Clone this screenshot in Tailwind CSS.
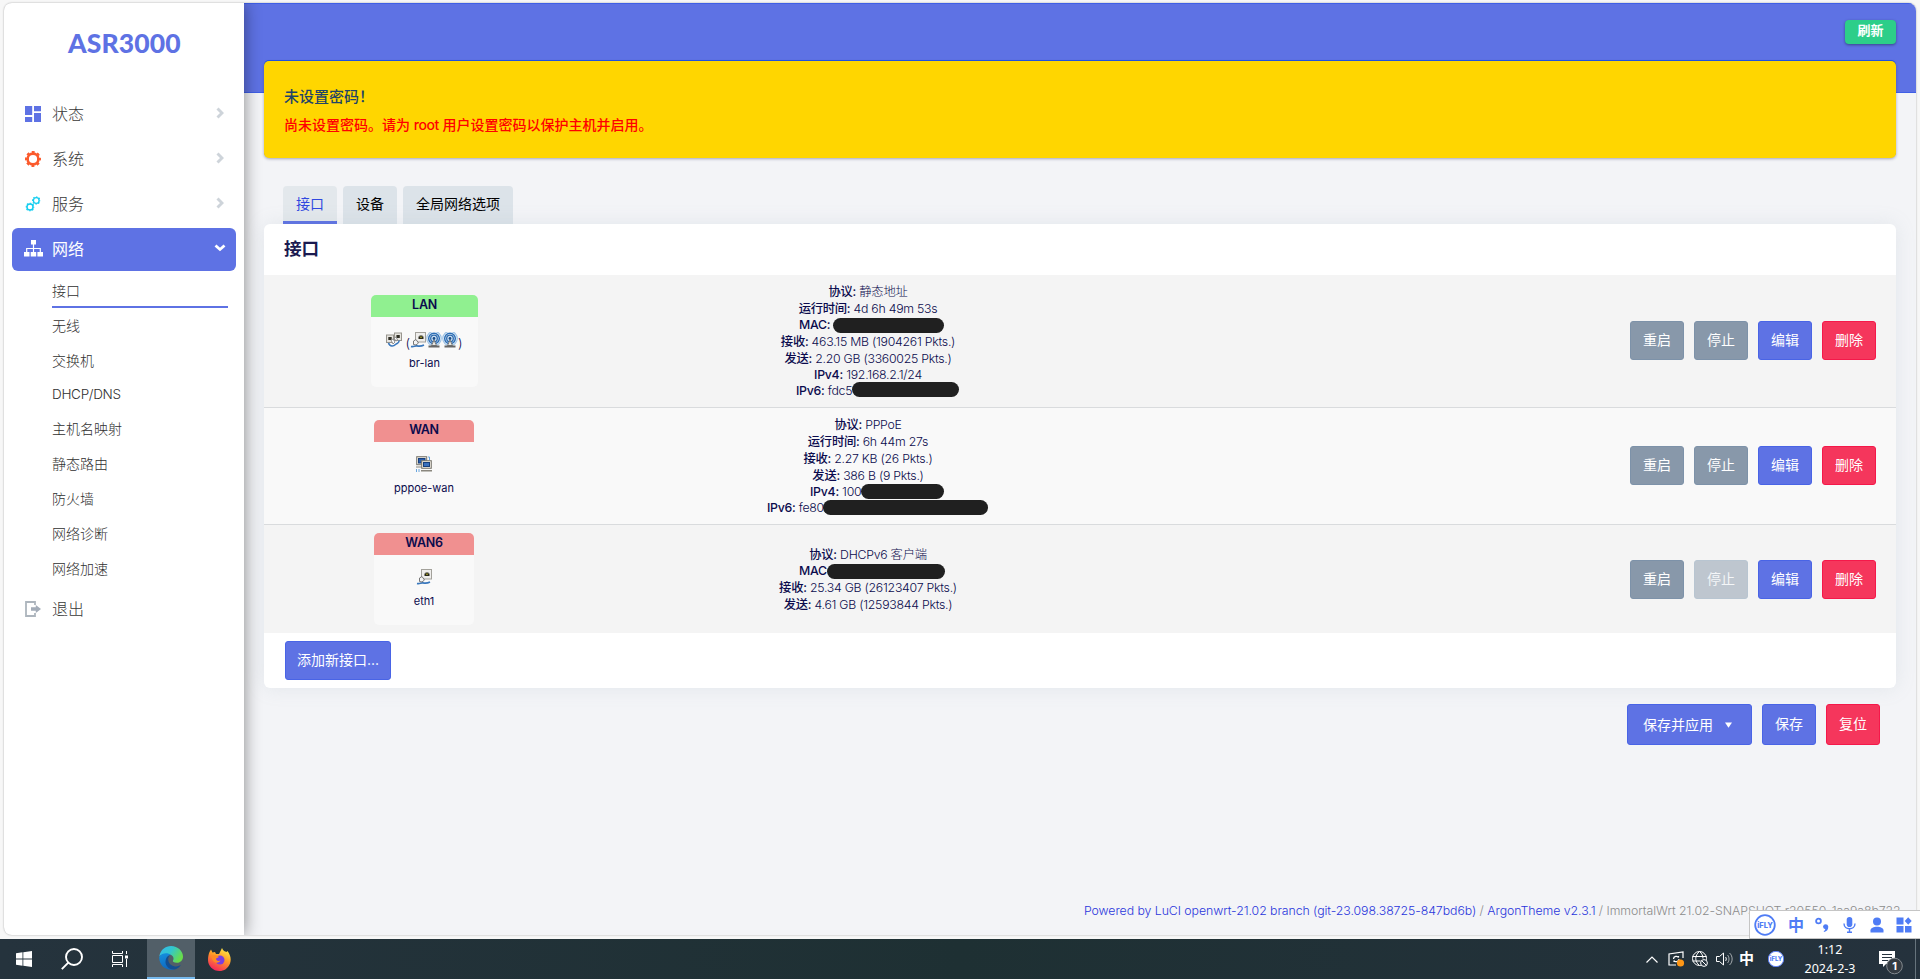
<!DOCTYPE html>
<html lang="zh-CN">
<head>
<meta charset="utf-8">
<title>ASR3000</title>
<script src="https://cdn.jsdelivr.net/npm/@tailwindcss/browser@4"></script>
</head>
<body class="w-[1920px] h-[979px] overflow-hidden bg-[#f7f7f7] flex flex-col font-['Inter','Noto_Sans_CJK_SC',sans-serif] text-[#0b0b4d]">
<svg class="hidden">
  <defs>
    <symbol id="gear" viewBox="0 0 16 16"><circle cx="8" cy="8" r="5.4" fill="none" stroke="currentColor" stroke-width="2.6"/><circle cx="8" cy="8" r="7" fill="none" stroke="currentColor" stroke-width="2" stroke-dasharray="2.9 2.598" stroke-dashoffset="1.45"/></symbol>
    <symbol id="chev" viewBox="0 0 8 12"><path d="M1.5 1.5 6 6l-4.500 4.500" fill="none" stroke="currentColor" stroke-width="2.900"/></symbol>
    <symbol id="eth" viewBox="0 0 16 16"><rect x="5.500" y=".5" width="10" height="9.500" fill="#efeeec" stroke="#a3a19b"/><path d="M8.500 4.500h1v-1h3v1h1V7h-5z" fill="#29291b"/><path d="M10 4.500h2v1.500h-2z" fill="#8a8426"/><path d="M1 14.500c3 .8 3.500-1 6-.6s4 .6 7-.9" fill="none" stroke="#3a78bd" stroke-width="1.600"/><path d="m3.500 9 2.500-1.500L8.500 11 6 13l-2.500-.5z" fill="#f4f4f4" stroke="#777"/></symbol>
    <symbol id="bridge" viewBox="0 0 16 16"><rect x="8.500" y="1" width="7" height="7.500" fill="#e7e5e0" stroke="#98958e"/><rect x=".5" y="3" width="7" height="7.500" fill="#e7e5e0" stroke="#98958e"/><path d="M2.300 5h3.400v3H2.300zM10.400 3h3.400v3h-3.400z" fill="#302f26"/><path d="M2.500 11c1.500 4 5 3.500 7 1.500s4-1 3.500-4" fill="none" stroke="#3a78bd" stroke-width="1.600"/><path d="m5 8 2-1 2 3-2 2zM8 6l2-1 1.500 3-1.500 1z" fill="#fff" stroke="#777" stroke-width=".8"/></symbol>
    <symbol id="wifi" viewBox="0 0 16 16"><circle cx="8" cy="6.500" r="7.200" fill="none" stroke="#9dc3e6" stroke-width="1.200"/><circle cx="8" cy="6.500" r="5.300" fill="none" stroke="#2c6fb8" stroke-width="1.500"/><circle cx="8" cy="6.500" r="3.300" fill="#cfe2f4" stroke="#2a68ad" stroke-width="1.300"/><circle cx="8" cy="6.500" r="1.400" fill="#174a86"/><path d="m8 8-2.500 5.500h5z" fill="#e8e8e4" stroke="#777"/><path d="M2.500 14.500h11" stroke="#666" stroke-width="1.800"/></symbol>
    <symbol id="ppp" viewBox="0 0 16 16"><rect x=".7" y=".7" width="10" height="8" fill="#eeeae0" stroke="#77756d"/><rect x="2.500" y="2.500" width="6.500" height="4.500" fill="#2a5fae" stroke="#173f7c"/><path d="M0 11h6" stroke="#8a877e" stroke-width="1.200"/><rect x="5.700" y="4.700" width="9.600" height="7.600" fill="#eeeae0" stroke="#77756d"/><rect x="7.500" y="6.500" width="6" height="4" fill="#3970bd" stroke="#173f7c"/><path d="M5 14.700h11" stroke="#8a877e" stroke-width="1.500"/><path d="M.5 13v3M3 13v3M12 1h1.500v3" stroke="#69a5dd" fill="none"/></symbol>
  </defs>
</svg>

<main class="mx-1 mt-[3px] h-[932px] w-[1912px] rounded-lg flex overflow-hidden bg-[#f3f4f7] shadow-[0_0_2px_rgba(0,0,0,0.35)] shrink-0">
  <aside class="w-60 h-full bg-white shrink-0 z-10 shadow-[0_0_16px_rgba(0,0,0,0.45)] text-[#383838]">
    <div class="h-[88px] pt-[21px] pl-[64px]"><div class="text-[26.500px] leading-[38px] font-black tracking-[0.1px] text-[#5e72e4] font-['Lato'] whitespace-nowrap">ASR3000</div></div>
    <nav class="px-2 text-base font-light">
      <div class="flex items-center h-[45px] pl-[13px] pr-[12px]"><svg class="w-4 h-4 text-[#5e72e4]" viewBox="0 0 16 16" fill="currentColor"><path d="M0 0h7.200v9H0zM9 0h7v5.200H9zM0 11h7.200v5H0zM9 7h7v9H9z"/></svg><span class="ml-[11px]">状态</span><svg class="w-2 h-3 ml-auto -mt-0.5 text-[#ced4da]"><use href="#chev"/></svg></div>
      <div class="flex items-center h-[45px] pl-[13px] pr-[12px]"><svg class="w-4 h-4 text-[#fb5a2c]"><use href="#gear"/></svg><span class="ml-[11px]">系统</span><svg class="w-2 h-3 ml-auto -mt-0.5 text-[#ced4da]"><use href="#chev"/></svg></div>
      <div class="flex items-center h-[45px] pl-[13px] pr-[12px]"><svg class="w-4 h-4 text-[#11cdef]" viewBox="0 0 16 16"><use href="#gear" x=".5" y="6.500" width="9" height="9"/><use href="#gear" x="7" y=".2" width="8.500" height="8.500"/></svg><span class="ml-[11px]">服务</span><svg class="w-2 h-3 ml-auto -mt-0.5 text-[#ced4da]"><use href="#chev"/></svg></div>
      <div class="flex items-center h-[43px] mt-[2px] pb-0.5 pl-[12px] pr-[10px] rounded-md bg-[#5e72e4] text-white font-normal"><svg class="w-[19px] h-[17px]" viewBox="0 0 19 17" fill="currentColor"><path d="M7 0h5v4.500H7zM0 12h5.500v4.500H0zM6.700 12h5.500v4.500H6.700zM13.400 12H19v4.500h-5.600z"/><path d="M9.500 4v8M2.700 12V8.500h13.600V12" fill="none" stroke="currentColor" stroke-width="1.200"/></svg><span class="ml-[9px]">网络</span><svg class="w-3 h-2 ml-auto -mt-0.5" viewBox="0 0 12 8"><path d="M1.500 1.500 6 5.500l4.500-4" fill="none" stroke="currentColor" stroke-width="2.800"/></svg></div>
      <ul class="pl-10 pr-2 text-sm text-[#303030]">
        <li class="h-[37px] pt-[2px] leading-[35px] border-b-2 border-[#5e72e4]">接口</li>
        <li class="h-[35px] leading-[35px]">无线</li>
        <li class="h-[35px] leading-[35px]">交换机</li>
        <li class="h-[33px] leading-[32px] text-[13.500px] tracking-[-0.300px]">DHCP/DNS</li>
        <li class="h-[35px] leading-[35px]">主机名映射</li>
        <li class="h-[35px] leading-[35px]">静态路由</li>
        <li class="h-[35px] leading-[35px]">防火墙</li>
        <li class="h-[35px] leading-[35px]">网络诊断</li>
        <li class="h-[35px] leading-[35px]">网络加速</li>
      </ul>
      <div class="flex items-center h-[45px] pl-[13px]"><svg class="w-4 h-4" viewBox="0 0 16 16" fill="none" stroke="#adb5bd" stroke-width="1.800"><path d="M10 4V1H1v14h9v-3"/><path d="M6 6.300h4.800V4L16 8l-5.200 4V9.700H6z" fill="#a3acb8" stroke="none"/></svg><span class="ml-[11px]">退出</span></div>
    </nav>
  </aside>

  <section class="flex-1 min-w-0 h-full flex flex-col">
    <header class="h-[90px] shrink-0 bg-[#5e72e4] border-y border-[#3f5fe6] flex justify-end items-start pt-4 pr-5">
      <span class="w-[51px] h-[24px] rounded bg-[#2dce89] text-white text-[13px] font-bold leading-[20px] text-center shadow-[0_1px_3px_rgba(0,0,0,0.4)]">刷新</span>
    </header>
    <div class="px-5 -mt-[32px] flex-1 flex flex-col">
      <div class="h-[97px] shrink-0 rounded-[5px] bg-[#ffd600] pl-5 pt-[22px] shadow-[0_1px_3px_rgba(50,50,93,0.4),0_-1px_0_#1f55e6]">
        <h4 class="text-[15px] leading-7 font-medium text-[#1f4468]">未设置密码！</h4>
        <p class="text-[14px] leading-[28px] font-medium text-[#ff0000]">尚未设置密码。请为 <span class="tracking-[-0.450px]">root</span> 用户设置密码以保护主机并启用。</p>
      </div>
      <div class="mt-[28px] h-[38px] shrink-0 pl-[19px] flex gap-1.5 text-sm leading-[36px] text-center text-black">
        <div class="w-[54px] rounded-t bg-[#e3e8ec] border-b-3 border-[#5e72e4] text-[#3048e0]">接口</div>
        <div class="w-[54px] rounded-t bg-[#dce3e9]">设备</div>
        <div class="w-[110px] rounded-t bg-[#dce3e9]">全局网络选项</div>
      </div>
      <div class="h-[464px] shrink-0 rounded-md bg-white shadow-[0_0_20px_rgba(136,152,170,0.15)] flex flex-col">
        <h3 class="h-[51px] pl-5 text-[17.600px] leading-[50px] font-bold text-[#1a1a50]">接口</h3>

        <div class="h-[133px] bg-[#f4f4f4] border-b border-[#d9dbdd] flex items-start">
          <div class="w-80 flex justify-center pt-5 pl-px">
            <div class="w-[107px] h-[92px] rounded-[5px] overflow-hidden bg-[#f9f9f9] text-center">
              <div class="h-[22px] bg-[#90f090] text-[12.500px] leading-[20px] font-semibold tracking-[-0.300px]">LAN</div>
              <div class="mt-[15px] h-5 flex justify-center items-start text-[13px] font-light leading-[22px]"><svg class="w-4 h-4 mr-[3px]"><use href="#bridge"/></svg><span>(</span><svg class="w-4 h-4"><use href="#eth"/></svg><svg class="w-4 h-4"><use href="#wifi"/></svg><svg class="w-4 h-4"><use href="#wifi"/></svg><span>)</span></div>
              <div class="text-[11px] leading-[22px]">br-lan</div>
            </div>
          </div>
          <div class="w-[568px] pt-2 text-center text-[12.300px] leading-[17px] tracking-[-0.250px] font-light whitespace-nowrap">
            <div class="h-[17px]"><b class="font-medium">协议:</b> 静态地址</div>
            <div class="h-[17px]"><b class="font-medium">运行时间:</b> 4d 6h 49m 53s</div>
            <div class="h-[16px] leading-[16px] flex pl-[215px]"><b class="font-medium w-[34px] text-left">MAC:</b><i class="w-[111px] h-[15px] rounded-full bg-[#202020] mt-px"></i></div>
            <div class="h-[17px]"><b class="font-medium">接收:</b> 463.15 MB (1904261 Pkts.)</div>
            <div class="h-[17px]"><b class="font-medium">发送:</b> 2.20 GB (3360025 Pkts.)</div>
            <div class="h-[16px] leading-[16px]"><b class="font-medium">IPv4:</b> 192.168.2.1/24</div>
            <div class="h-[16px] leading-[16px] flex pl-[212px]"><span class="w-[56px] text-left"><b class="font-medium">IPv6:</b> fdc5</span><i class="w-[107px] h-[15px] rounded-full bg-[#202020] -mt-px"></i></div>
          </div>
          <div class="ml-auto pt-[46px] pr-5 flex gap-2.5 text-sm leading-[35px] text-white text-center">
            <span class="w-[54px] h-[39px] rounded-[3px] border bg-[#8898aa] border-[#7d92a9]">重启</span><span class="w-[54px] h-[39px] rounded-[3px] border bg-[#8898aa] border-[#7d92a9]">停止</span><span class="w-[54px] h-[39px] rounded-[3px] border bg-[#5e72e4] border-[#4964e6]">编辑</span><span class="w-[54px] h-[39px] rounded-[3px] border bg-[#f5365c] border-[#f5184a]">删除</span>
          </div>
        </div>

        <div class="h-[117px] bg-[#f9f9f9] border-b border-[#d9dbdd] flex items-start">
          <div class="w-80 flex justify-center pt-3">
            <div class="w-[100px] h-[92px] rounded-[5px] overflow-hidden text-center">
              <div class="h-[22px] bg-[#f09090] text-[12.500px] leading-[20px] font-semibold tracking-[-0.300px]">WAN</div>
              <div class="mt-[14px] h-[21px] flex justify-center"><svg class="w-4 h-4"><use href="#ppp"/></svg></div>
              <div class="text-[11px] leading-[22px]">pppoe-wan</div>
            </div>
          </div>
          <div class="w-[568px] pt-2 text-center text-[12.300px] leading-[17px] tracking-[-0.250px] font-light whitespace-nowrap">
            <div class="h-[17px]"><b class="font-medium">协议:</b> PPPoE</div>
            <div class="h-[17px]"><b class="font-medium">运行时间:</b> 6h 44m 27s</div>
            <div class="h-[17px]"><b class="font-medium">接收:</b> 2.27 KB (26 Pkts.)</div>
            <div class="h-[17px]"><b class="font-medium">发送:</b> 386 B (9 Pkts.)</div>
            <div class="h-[16px] leading-[16px] flex pl-[226px]"><span class="w-[51px] text-left"><b class="font-medium">IPv4:</b> 100</span><i class="w-[83px] h-[15px] rounded-full bg-[#202020]"></i></div>
            <div class="h-[16px] leading-[16px] flex pl-[183px]"><span class="w-[56px] text-left"><b class="font-medium">IPv6:</b> fe80</span><i class="w-[165px] h-[15px] rounded-full bg-[#202020]"></i></div>
          </div>
          <div class="ml-auto pt-[38px] pr-5 flex gap-2.5 text-sm leading-[35px] text-white text-center">
            <span class="w-[54px] h-[39px] rounded-[3px] border bg-[#8898aa] border-[#7d92a9]">重启</span><span class="w-[54px] h-[39px] rounded-[3px] border bg-[#8898aa] border-[#7d92a9]">停止</span><span class="w-[54px] h-[39px] rounded-[3px] border bg-[#5e72e4] border-[#4964e6]">编辑</span><span class="w-[54px] h-[39px] rounded-[3px] border bg-[#f5365c] border-[#f5184a]">删除</span>
          </div>
        </div>

        <div class="h-[108px] bg-[#f4f4f4] flex items-start">
          <div class="w-80 flex justify-center pt-2">
            <div class="w-[100px] h-[92px] rounded-[5px] overflow-hidden bg-[#f9f9f9] text-center">
              <div class="h-[22px] bg-[#f09090] text-[12.500px] leading-[20px] font-semibold tracking-[-0.300px]">WAN6</div>
              <div class="mt-[14px] h-[21px] flex justify-center"><svg class="w-4 h-4"><use href="#eth"/></svg></div>
              <div class="text-[11px] leading-[22px]">eth1</div>
            </div>
          </div>
          <div class="w-[568px] pt-[21px] text-center text-[12.300px] leading-[17px] tracking-[-0.250px] font-light whitespace-nowrap">
            <div class="h-[17px]"><b class="font-medium">协议:</b> DHCPv6 客户端</div>
            <div class="h-[16px] leading-[16px] flex pl-[215px]"><b class="font-medium w-[28px] text-left">MAC</b><i class="w-[118px] h-[15px] rounded-full bg-[#202020] mt-px"></i></div>
            <div class="h-[17px]"><b class="font-medium">接收:</b> 25.34 GB (26123407 Pkts.)</div>
            <div class="h-[17px]"><b class="font-medium">发送:</b> 4.61 GB (12593844 Pkts.)</div>
          </div>
          <div class="ml-auto pt-[35px] pr-5 flex gap-2.5 text-sm leading-[35px] text-white text-center">
            <span class="w-[54px] h-[39px] rounded-[3px] border bg-[#8898aa] border-[#7d92a9]">重启</span><span class="w-[54px] h-[39px] rounded-[3px] border bg-[#bec6cf] border-[#b8c5d1] text-[#f4f6f8]">停止</span><span class="w-[54px] h-[39px] rounded-[3px] border bg-[#5e72e4] border-[#4964e6]">编辑</span><span class="w-[54px] h-[39px] rounded-[3px] border bg-[#f5365c] border-[#f5184a]">删除</span>
          </div>
        </div>
        <div class="pl-[21px] pt-2"><span class="block w-[106px] h-[39px] rounded-[3px] border bg-[#5e72e4] border-[#4964e6] text-white text-sm leading-[35px] text-center">添加新接口...</span></div>
      </div>

      <div class="mt-4 h-[41px] pr-4 flex justify-end gap-2.5 text-sm leading-[37px] text-white text-center">
        <span class="w-[125px] rounded-[3px] border bg-[#5e72e4] border-[#4964e6] flex items-center pl-[15px]">保存并应用<svg class="w-[7px] h-1.5 ml-[12px]" viewBox="0 0 8 6"><path d="M0 0h8L4 6z" fill="#fff"/></svg></span>
        <span class="w-[54px] rounded-[3px] border bg-[#5e72e4] border-[#4964e6]">保存</span>
        <span class="w-[54px] rounded-[3px] border bg-[#f5365c] border-[#f5184a]">复位</span>
      </div>
      <footer class="mt-auto mb-[12px] pl-[820px] text-[12.300px] leading-6 tracking-[-0.050px] font-light text-[#8c8c8c] whitespace-nowrap"><span class="text-[#2a36dc]">Powered by LuCI openwrt-21.02 branch (git-23.098.38725-847bd6b)</span> / <span class="text-[#2a36dc]">ArgonTheme v2.3.1</span> / ImmortalWrt 21.02-SNAPSHOT r20550-1aa9a8b722</footer>
    </div>
  </section>
</main>

<div class="absolute z-20 left-[1749px] top-[910px] w-[172px] h-[29px] bg-white border border-[#c5c5c5] flex items-center pl-[4px] text-[#4f7cf5]">
  <svg class="w-[22px] h-[22px]" viewBox="0 0 22 22"><circle cx="11" cy="11" r="9.800" fill="#fff" stroke="#4f7cf5" stroke-width="1.800"/><text x="11" y="13.800" font-size="7.500" font-weight="800" text-anchor="middle" fill="#4f7cf5" font-family="Inter">iFLY</text></svg>
  <span class="ml-3 w-4 text-base leading-[26px] font-bold">中</span>
  <svg class="ml-[11px] w-[14px] h-4" viewBox="0 0 14 16"><circle cx="3.500" cy="4" r="2.400" fill="none" stroke="currentColor" stroke-width="1.800"/><path d="M8 9.500a2.700 2.700 0 0 1 5.300 0c0 3-1.300 5-4.300 5.500l-.3-1c1-.4 1.500-1.200 1.600-1.800A2.700 2.700 0 0 1 8 9.500z" fill="currentColor"/></svg>
  <svg class="ml-[14px] w-[13px] h-4" viewBox="0 0 13 16"><rect x="3.700" y="0" width="5.600" height="10" rx="2.800" fill="currentColor"/><path d="M1 6.500c0 7 11 7 11 0M6.500 12v3.500M4 15.300h5" fill="none" stroke="currentColor" stroke-width="1.400"/></svg>
  <svg class="ml-[14px] w-[14px] h-4" viewBox="0 0 14 16" fill="currentColor"><circle cx="7" cy="4.400" r="4"/><path d="M.5 15.500v-2.200C.5 8.500 13.500 8.500 13.500 13.300v2.200z"/></svg>
  <svg class="ml-3 w-4 h-4" viewBox="0 0 16 16" fill="currentColor"><path d="M.5.500h7v7h-7zM.5 9h7v6.500h-7zM9 9h6.500v6.500H9zM12.200.300l3.500 3.700-3.500 3.700L8.700 4z"/></svg>
</div>

<div class="mt-1 h-10 w-full bg-gradient-to-r from-[#25333d] via-[#1e3033] to-[#25323d] flex items-center text-white shrink-0">
  <svg class="ml-4 w-4 h-4" viewBox="0 0 16 16" fill="#fff"><path d="M0 2.200 6.500 1.300v6.300H0zM7.300 1.200 16 0v7.600H7.300zM0 8.400h6.500v6.300L0 13.800zM7.300 8.400H16V16l-8.700-1.200z"/></svg>
  <svg class="ml-[29px] w-[22px] h-[22px]" viewBox="0 0 22 22" fill="none" stroke="#fff" stroke-width="1.900"><circle cx="13" cy="9" r="8"/><path d="M7.300 14.700.800 21.200"/></svg>
  <svg class="ml-[29px] w-4 h-4" viewBox="0 0 16 16" fill="none" stroke="#fff"><path d="M.5 0v2.500h10V0M.5 4.500h10v7H.5zM.5 16v-2.500h10V16M14.500 0v3M14.500 8v8"/><path d="M13 4.500h3v3h-3z" fill="#fff" stroke="none"/></svg>
  <div class="ml-[19px] w-12 h-10 bg-[#525f68] border-b-2 border-[#76b9ed] flex items-center justify-center">
    <svg class="w-6 h-6" viewBox="0 0 24 24"><defs><linearGradient id="eg" x1="0" y1="0" x2="1" y2=".5"><stop offset="0" stop-color="#35b9ee"/><stop offset=".5" stop-color="#32c6cf"/><stop offset="1" stop-color="#68dd4b"/></linearGradient><linearGradient id="eb" x1="0" y1="0" x2=".3" y2="1"><stop offset="0" stop-color="#1490df"/><stop offset="1" stop-color="#1069bf"/></linearGradient></defs><path d="M.3 10.500C1.500 3.500 6.500 0 12 0c7 0 12 5.300 12 10.500 0 4-3 6.300-6.200 6.300-3 0-4.500-1.300-3.800-2.300 1-1.300 1-4.500-2.500-5.800C7 7 1.800 8.500.3 10.500z" fill="url(#eg)"/><path d="M.2 11C3 6.500 9 6.500 12 9c-3.500 0-5 3-4.300 6.500.8 4.200 5 6.700 9.300 7.300C9 26 0 21 .2 11z" fill="url(#eb)"/><path d="M11 9.300C7.500 12 9 19.500 16 20.500c3 .4 5-1 6-1.700-1.500 2.700-4 4.300-6.700 4.800C9 23.500 5 18.500 7 13c.7-2 2.300-3.500 4-3.700z" fill="#144e91"/></svg>
  </div>
  <svg class="ml-[13px] w-[23px] h-[23px]" viewBox="0 0 23 23"><defs><linearGradient id="ff" x1=".8" y1="0" x2=".3" y2="1"><stop offset="0" stop-color="#fff14a"/><stop offset=".45" stop-color="#ff9a26"/><stop offset="1" stop-color="#f5215f"/></linearGradient></defs><path d="M1.500 4 3 1.500 4.500 4.500 7 4l1 2h3l3-6c1 3 3 3.500 4.500 4l1-1c3 4 4 8 2.500 12.500C20 20.500 16 23 11.500 23 5 23 0 18 0 12 0 9 .5 6 1.500 4z" fill="url(#ff)"/><circle cx="12" cy="12" r="4.500" fill="#7a3ee0"/><path d="M3 8c3-1.500 6-1 8 1l-3 1.500c0 2 2 3 4.500 2-2 3.500-7 2.500-8.500-1.500z" fill="#ff8a24"/></svg>

  <svg class="ml-auto w-3 h-[7px]" viewBox="0 0 12 7"><path d="M.5 6.500 6 1l5.500 5.500" fill="none" stroke="#fff" stroke-width="1.200"/></svg>
  <svg class="ml-[10px] w-[17px] h-4" viewBox="0 0 17 16" fill="none" stroke="#fff" stroke-width="1.200"><path d="M8 14H1V3l14-2v6"/><path d="M5.500 8c0-3 4-3.500 5-1.500V5M11 8c0 3-4 3.500-5 1.500V11"/><circle cx="12.500" cy="12" r="3.600" fill="#ff9716" stroke="none"/></svg>
  <svg class="ml-[7px] w-4 h-4" viewBox="0 0 16 16" fill="none" stroke="#fff"><circle cx="7.500" cy="7.500" r="7"/><path d="M7.500.5c-5 4-5 10 0 14M7.500.5c2.500 2 3.500 4.500 3.500 7M.5 5.500h14M.5 10h8"/><circle cx="12" cy="12" r="3.400" fill="#25323d"/><path d="m9.700 9.700 4.600 4.600"/></svg>
  <svg class="ml-2 w-[17px] h-4" viewBox="0 0 17 16" fill="none" stroke="#fff"><path d="M.5 5.500h3L7.500 2v12l-4-3.500h-3zM9.500 6c1 1 1 3 0 4"/><path d="M11.500 4c2 2 2 6 0 8M13.500 2c3.500 3 3.500 9 0 12" opacity=".6"/></svg>
  <span class="ml-[6px] mr-px w-4 text-[15px] leading-5 font-bold">中</span>
  <svg class="ml-3 w-4 h-4" viewBox="0 0 16 16"><circle cx="8" cy="8" r="7.700" fill="#fff" stroke="#587df5"/><text x="8" y="10.300" font-size="6" font-weight="800" text-anchor="middle" fill="#4f7cf5" font-family="Inter">iFLY</text></svg>
  <div class="ml-[16px] w-[60px] text-center text-[12.500px] leading-[19px] font-['Noto_Sans']">1:12<br>2024-2-3</div>
  <svg class="ml-[19px] w-6 h-6 mt-2" viewBox="0 0 24 24"><path d="M0 0h16v13H7l-3 3v-3H0z" fill="#fff"/><path d="M3 3.500h10M3 6.500h10M3 9.500h6" stroke="#25323d"/><circle cx="15.500" cy="15" r="7.800" fill="#343b42" stroke="#83898e"/><text x="15.500" y="19" font-size="11" font-weight="700" text-anchor="middle" fill="#fff" font-family="Inter">1</text></svg>
  <div class="ml-[12px] mr-1 w-px h-10 bg-[#66737c]"></div>
</div>
</body>
</html>
